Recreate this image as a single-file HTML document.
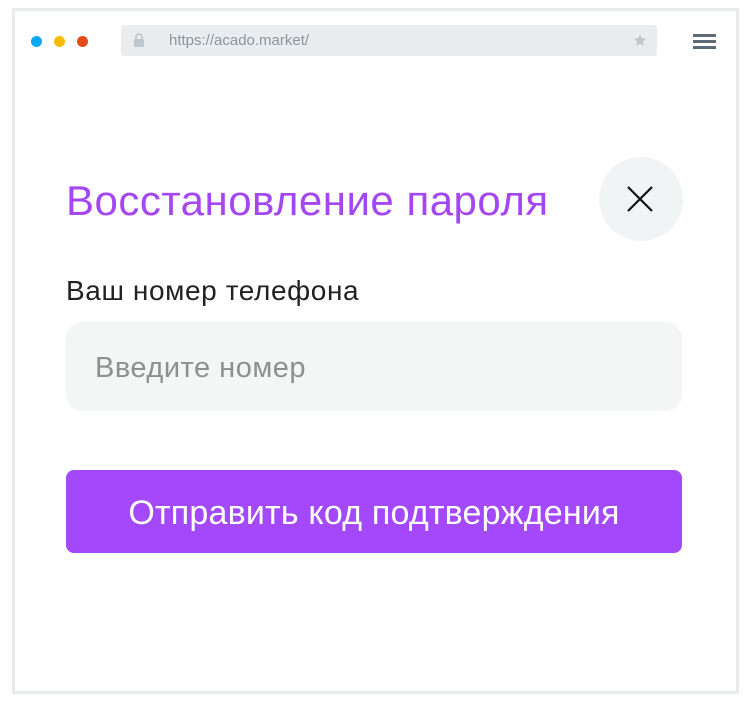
<!DOCTYPE html>
<html><head><meta charset="utf-8"><style>
*{margin:0;padding:0;box-sizing:border-box}
body{width:751px;height:709px;background:#fff;position:relative;font-family:"Liberation Sans",sans-serif;overflow:hidden}
.frame{position:absolute;left:12px;top:8px;width:727px;height:686px;border:3px solid #e8eaec}
.dot{position:absolute;width:11px;height:11px;border-radius:50%;top:36px}
.url{position:absolute;left:121px;top:25px;width:536px;height:31px;background:#e9edf0;border-radius:3px}
.url span{position:absolute;left:48px;top:7px;font-size:15px;color:#8a959e}
.ham{position:absolute;left:693px;width:23px;height:3px;background:#5e6c78}
.abs{position:absolute;white-space:nowrap}
</style></head><body>
<div class="frame"></div>
<div class="dot" style="left:31px;background:#0aa8f5"></div>
<div class="dot" style="left:54px;background:#fbbb0a"></div>
<div class="dot" style="left:77px;background:#e54b1a"></div>
<div class="url">
<svg style="position:absolute;left:12px;top:8px" width="12" height="14" viewBox="0 0 12 14"><path d="M3 6V4a3 3 0 0 1 6 0v2" stroke="#bfc6cc" stroke-width="1.8" fill="none"/><rect x="1" y="6" width="10" height="8" rx="1" fill="#bfc6cc"/></svg>
<span>https://acado.market/</span>
<svg style="position:absolute;left:512px;top:8px" width="14" height="14" viewBox="0 0 24 24"><path d="M12 2l3 7 7.5.6-5.7 5 1.8 7.4L12 18l-6.6 4 1.8-7.4-5.7-5L9 9z" fill="#bfc6cc"/></svg>
</div>
<div class="ham" style="top:34px"></div><div class="ham" style="top:40px"></div><div class="ham" style="top:46px"></div>
<div class="abs" style="left:66px;top:177px;font-size:42px;color:#a446f3;letter-spacing:0.5px">Восстановление пароля</div>
<div style="position:absolute;left:599px;top:157px;width:84px;height:84px;border-radius:50%;background:#f1f4f4"></div>
<svg style="position:absolute;left:626px;top:185px" width="28" height="28" viewBox="0 0 28 28"><path d="M2 2L26 26M26 2L2 26" stroke="#111" stroke-width="2.2"/></svg>
<div class="abs" style="left:66px;top:275px;font-size:28px;color:#222;letter-spacing:0.6px">Ваш номер телефона</div>
<div style="position:absolute;left:66px;top:322px;width:616px;height:89px;background:#f4f5f5;border-radius:16px"></div>
<div class="abs" style="left:95px;top:352px;font-size:29px;color:#8c9190;letter-spacing:0.5px">Введите номер</div>
<div style="position:absolute;left:66px;top:470px;width:616px;height:83px;background:#a348fa;border-radius:8px;color:#fff;font-size:34px;text-align:center;line-height:86px;letter-spacing:0.2px">Отправить код подтверждения</div>
</body></html>
